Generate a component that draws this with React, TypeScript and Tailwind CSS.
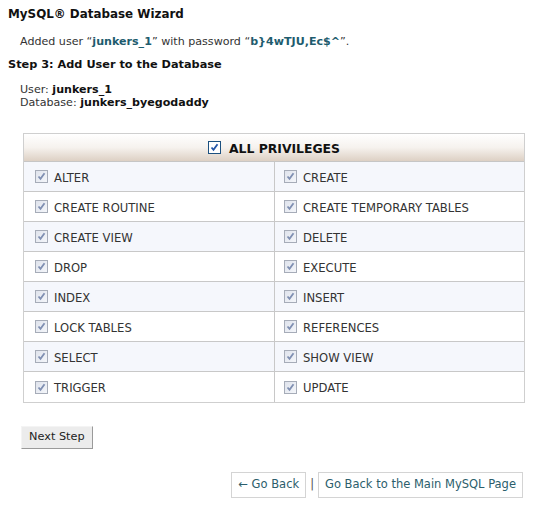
import React from "react";

const rows: [string, string][] = [
  ["ALTER", "CREATE"],
  ["CREATE ROUTINE", "CREATE TEMPORARY TABLES"],
  ["CREATE VIEW", "DELETE"],
  ["DROP", "EXECUTE"],
  ["INDEX", "INSERT"],
  ["LOCK TABLES", "REFERENCES"],
  ["SELECT", "SHOW VIEW"],
  ["TRIGGER", "UPDATE"],
];

function Check({ strong = false }: { strong?: boolean }) {
  return (
    <span
      className={
        strong
          ? "inline-flex w-[13px] h-[13px] shrink-0 items-center justify-center border border-[#1c5180] bg-white"
          : "inline-flex w-[13px] h-[13px] shrink-0 items-center justify-center border border-[#a6acb8] bg-gradient-to-br from-[#dfe3ec] to-[#f4f6fa]"
      }
    >
      <svg width="9" height="9" viewBox="0 0 9 9">
        <path
          d="M1.5 4.5 L3.5 6.8 L7.5 1.2"
          fill="none"
          stroke={strong ? "#2456a8" : "#7f8fb2"}
          strokeWidth="1.8"
        />
      </svg>
    </span>
  );
}

const pw = "b}4wTJU,Ec$^";

export default function App() {
  return (
    <div className="w-[545px] h-[505px] bg-white text-[#222] font-['DejaVu_Sans',Verdana,sans-serif] text-[11px] overflow-hidden">
      <div className="pl-[8px] pt-[7px]">
        <div className="text-[11.9px] font-bold leading-[15px] text-[#111]">MySQL® Database Wizard</div>
        <div className="pl-[12px] mt-[13px] leading-[14px] text-[11.1px] text-[#333]">
          Added user “<span className="font-bold text-[#1e5c6e]">junkers_1</span>” with password “
          <span className="font-bold text-[#1e5c6e]">{pw}</span>”.
        </div>
        <div className="mt-[9px] text-[11.3px] font-bold leading-[14px] text-[#111]">Step 3: Add User to the Database</div>
        <div className="pl-[12px] mt-[11px] leading-[13px] text-[11.1px] text-[#333]">
          <div>
            User: <span className="font-bold text-[#111]">junkers_1</span>
          </div>
          <div>
            Database: <span className="font-bold text-[#111]">junkers_byegodaddy</span>
          </div>
        </div>
      </div>

      <div className="ml-[23px] mt-[24px] w-[502px] border border-[#cfcfcf]">
        <div className="h-[28px] flex items-center justify-center gap-[8px] bg-gradient-to-b from-white via-[#f6f2ee] to-[#ddd0c4] border-b border-[#c6c6c6]">
          <Check strong />
          <span className="font-bold text-[12.4px] text-[#111] pt-[3px]">ALL PRIVILEGES</span>
        </div>
        {rows.map(([a, b], i) => (
          <div
            key={a}
            className={
              (i % 2 === 0 ? "bg-[#f5f7fc]" : "bg-white") +
              " grid grid-cols-[251px_1fr] h-[30px] text-[11.6px]" +
              (i < rows.length - 1 ? " border-b border-[#c8c8c8]" : "")
            }
          >
            <div className="flex items-center gap-[6px] pl-[11px] border-r border-[#c8c8c8] text-[#333]">
              <Check />
              <span className="pt-[4px]">{a}</span>
            </div>
            <div className="flex items-center gap-[6px] pl-[9px] text-[#333]">
              <Check />
              <span className="pt-[4px]">{b}</span>
            </div>
          </div>
        ))}
      </div>

      <div className="ml-[21px] mt-[23px]">
        <button className="h-[23px] px-[7px] bg-[#ececec] border border-t-[#f4f4f4] border-l-[#f4f4f4] border-r-[#9a9a9a] border-b-[#9a9a9a] text-[11.3px] text-[#222] font-['DejaVu_Sans',Verdana,sans-serif]">
          Next Step
        </button>
      </div>

      <div className="mt-[23px] mr-[22px] flex justify-end items-center gap-[4px] text-[11.5px] text-[#2c5e6c]">
        <span className="h-[26px] px-[6px] flex items-center border border-[#d4d4d4]">← Go Back</span>
        <span className="text-[#555]">|</span>
        <span className="h-[26px] px-[6px] flex items-center border border-[#d4d4d4]">Go Back to the Main MySQL Page</span>
      </div>
    </div>
  );
}
